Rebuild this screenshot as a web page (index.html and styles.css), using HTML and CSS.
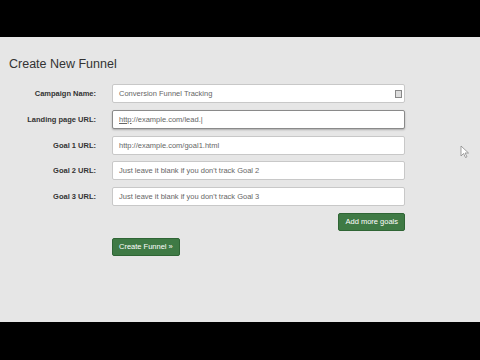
FILE: index.html
```html
<!DOCTYPE html>
<html>
<head>
<meta charset="utf-8">
<link rel="stylesheet" href="styles.css">
</head>
<body>
<div class="bar"></div>
<main class="page">
  <h1 class="title">Create New Funnel</h1>
  <form class="form">
    <label class="lbl">Campaign Name:</label>
    <div class="field"><span class="txt">Conversion Funnel Tracking</span><span class="ico"></span></div>
    <label class="lbl">Landing page URL:</label>
    <div class="field focus"><span class="txt"><u>http</u>://example.com/lead.|</span></div>
    <label class="lbl">Goal 1 URL:</label>
    <div class="field"><span class="txt">http://example.com/goal1.html</span></div>
    <label class="lbl">Goal 2 URL:</label>
    <div class="field"><span class="txt">Just leave it blank if you don't track Goal 2</span></div>
    <label class="lbl">Goal 3 URL:</label>
    <div class="field"><span class="txt">Just leave it blank if you don't track Goal 3</span></div>
    <div></div>
    <div class="btnrow end"><span class="btn">Add more goals</span></div>
    <div></div>
    <div class="btnrow"><span class="btn">Create Funnel &raquo;</span></div>
  </form>
  <svg class="cursor" width="10" height="14" viewBox="0 0 10 14"><path d="M1 1 L1 11 L3.5 8.5 L5.5 12.5 L7 11.8 L5 8 L8.5 8 Z" fill="#fff" stroke="#888" stroke-width="0.8"/></svg>
</main>
<div class="bar bottom"></div>
</body>
</html>
```
FILE: styles.css
```css
html, body { margin: 0; padding: 0; background: #000; }
body { font-family: "Liberation Sans", Arial, sans-serif; width: 480px; height: 360px; overflow: hidden; }
.bar { height: 37px; background: #000; }
.bar.bottom { height: 38px; }
.page { position: relative; height: 285px; background: #e6e6e6; box-sizing: border-box; padding: 20px 0 0 9px; }
.title { margin: 0; font-size: 12.5px; font-weight: normal; color: #333; line-height: 14px; }
.form { display: grid; grid-template-columns: 87px 293px; column-gap: 16px; row-gap: 6.8px; margin-top: 13px; align-items: center; }
.lbl { text-align: right; font-size: 7.5px; font-weight: bold; color: #333; }
.field { height: 19px; box-sizing: border-box; background: #fff; border: 1px solid #c8c8c8; border-radius: 2px; display: flex; align-items: center; padding: 0 6px; position: relative; }
.field.focus { border-color: #8a8a8a; box-shadow: 0 1px 2px rgba(0,0,0,0.25); }
.txt { font-size: 7.5px; color: #666; white-space: nowrap; }
.ico { position: absolute; right: 2px; top: 5px; width: 5px; height: 6px; border: 1px solid #888; background: #ddd; }
.btnrow { display: flex; height: 18px; }
.btnrow.end { justify-content: flex-end; }
.btn { display: block; height: 18px; line-height: 16px; padding: 0 6px; background: #3f7a45; color: #fff; font-size: 7.5px; border-radius: 2px; border: 1px solid #2f6535; box-sizing: border-box; }
.cursor { position: absolute; left: 460px; top: 108px; }
```
